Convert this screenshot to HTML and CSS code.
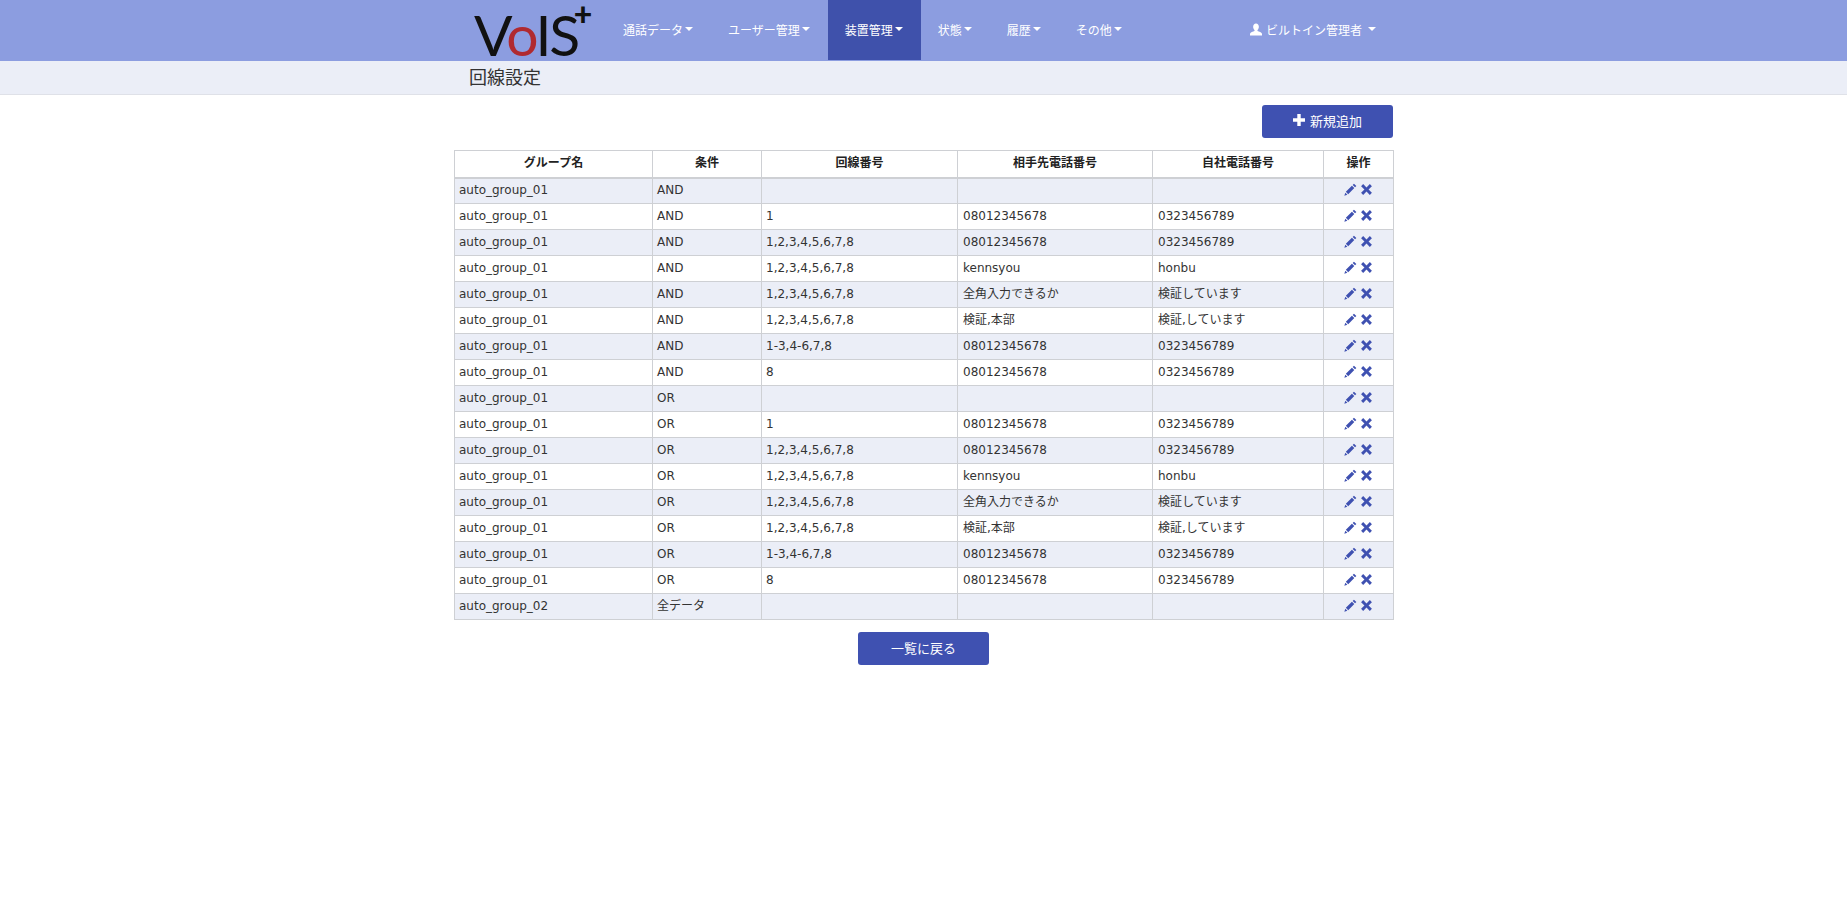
FILE: index.html
```html
<!DOCTYPE html>
<html lang="ja">
<head>
    <meta charset="UTF-8">
    <title>回線設定</title>
    <link rel="stylesheet" href="styles.css">
</head>
<body>
    <svg class="sprite" width="0" height="0">
        <symbol id="i-pencil" viewBox="0 0 12 12"><path d="M9.200.6l2.200 2.200-1.200 1.200L8 1.800zM7.300 2.500l2.200 2.200-5.600 5.600-2.200-2.200zM1.200 8.900l1.900 1.900-2.800.9z"/></symbol>
        <symbol id="i-cross" viewBox="0 0 12 12"><path d="M2.900 1L6 4.100 9.100 1 11 2.900 7.900 6 11 9.100 9.100 11 6 7.900 2.900 11 1 9.100 4.100 6 1 2.900z"/></symbol>
        <symbol id="i-plus" viewBox="0 0 12 12"><path d="M4.300 0h3.400v4.300H12v3.400H7.700V12H4.300V7.700H0V4.300h4.300z"/></symbol>
        <symbol id="i-user" viewBox="0 0 13 13"><path d="M6.500 0C8.400 0 9.600 1.500 9.600 3.500c0 1.400-.6 2.800-1.500 3.600v1.100c1.800.6 4.400 1.400 4.900 2.800V13H0v-2c.5-1.400 3.100-2.200 4.900-2.800V7.100C4 6.300 3.400 4.900 3.400 3.500 3.400 1.500 4.600 0 6.500 0z"/></symbol>
    </svg>

    <header class="navbar">
        <div class="container nav-inner">
            <a class="logo" href="#">V<span class="logo-o">o</span>IS<span class="logo-plus">+</span></a>
            <ul class="nav-menu">
                <li><a href="#">通話データ<span class="caret"></span></a></li>
                <li><a href="#">ユーザー管理<span class="caret"></span></a></li>
                <li class="active"><a href="#">装置管理<span class="caret"></span></a></li>
                <li><a href="#">状態<span class="caret"></span></a></li>
                <li><a href="#">履歴<span class="caret"></span></a></li>
                <li><a href="#">その他<span class="caret"></span></a></li>
            </ul>
            <a class="nav-user" href="#"><svg class="icon-user"><use href="#i-user"/></svg>ビルトイン管理者<span class="caret caret-user"></span></a>
        </div>
    </header>

    <div class="page-title">
        <div class="container"><h1>回線設定</h1></div>
    </div>

    <main class="container">
        <div class="toolbar">
            <a class="btn btn-add" href="#"><svg class="icon-plus"><use href="#i-plus"/></svg>新規追加</a>
        </div>

        <table class="list">
            <colgroup>
                <col class="c-group"><col class="c-cond"><col class="c-line"><col class="c-peer"><col class="c-own"><col class="c-ops">
            </colgroup>
            <thead>
                <tr><th>グループ名</th><th>条件</th><th>回線番号</th><th>相手先電話番号</th><th>自社電話番号</th><th>操作</th></tr>
            </thead>
            <tbody>
                <tr><td>auto_group_01</td><td>AND</td><td></td><td></td><td></td><td class="ops"><svg class="op"><use href="#i-pencil"/></svg><svg class="op"><use href="#i-cross"/></svg></td></tr>
                <tr><td>auto_group_01</td><td>AND</td><td>1</td><td>08012345678</td><td>0323456789</td><td class="ops"><svg class="op"><use href="#i-pencil"/></svg><svg class="op"><use href="#i-cross"/></svg></td></tr>
                <tr><td>auto_group_01</td><td>AND</td><td>1,2,3,4,5,6,7,8</td><td>08012345678</td><td>0323456789</td><td class="ops"><svg class="op"><use href="#i-pencil"/></svg><svg class="op"><use href="#i-cross"/></svg></td></tr>
                <tr><td>auto_group_01</td><td>AND</td><td>1,2,3,4,5,6,7,8</td><td>kennsyou</td><td>honbu</td><td class="ops"><svg class="op"><use href="#i-pencil"/></svg><svg class="op"><use href="#i-cross"/></svg></td></tr>
                <tr><td>auto_group_01</td><td>AND</td><td>1,2,3,4,5,6,7,8</td><td>全角入力できるか</td><td>検証しています</td><td class="ops"><svg class="op"><use href="#i-pencil"/></svg><svg class="op"><use href="#i-cross"/></svg></td></tr>
                <tr><td>auto_group_01</td><td>AND</td><td>1,2,3,4,5,6,7,8</td><td>検証,本部</td><td>検証,しています</td><td class="ops"><svg class="op"><use href="#i-pencil"/></svg><svg class="op"><use href="#i-cross"/></svg></td></tr>
                <tr><td>auto_group_01</td><td>AND</td><td>1-3,4-6,7,8</td><td>08012345678</td><td>0323456789</td><td class="ops"><svg class="op"><use href="#i-pencil"/></svg><svg class="op"><use href="#i-cross"/></svg></td></tr>
                <tr><td>auto_group_01</td><td>AND</td><td>8</td><td>08012345678</td><td>0323456789</td><td class="ops"><svg class="op"><use href="#i-pencil"/></svg><svg class="op"><use href="#i-cross"/></svg></td></tr>
                <tr><td>auto_group_01</td><td>OR</td><td></td><td></td><td></td><td class="ops"><svg class="op"><use href="#i-pencil"/></svg><svg class="op"><use href="#i-cross"/></svg></td></tr>
                <tr><td>auto_group_01</td><td>OR</td><td>1</td><td>08012345678</td><td>0323456789</td><td class="ops"><svg class="op"><use href="#i-pencil"/></svg><svg class="op"><use href="#i-cross"/></svg></td></tr>
                <tr><td>auto_group_01</td><td>OR</td><td>1,2,3,4,5,6,7,8</td><td>08012345678</td><td>0323456789</td><td class="ops"><svg class="op"><use href="#i-pencil"/></svg><svg class="op"><use href="#i-cross"/></svg></td></tr>
                <tr><td>auto_group_01</td><td>OR</td><td>1,2,3,4,5,6,7,8</td><td>kennsyou</td><td>honbu</td><td class="ops"><svg class="op"><use href="#i-pencil"/></svg><svg class="op"><use href="#i-cross"/></svg></td></tr>
                <tr><td>auto_group_01</td><td>OR</td><td>1,2,3,4,5,6,7,8</td><td>全角入力できるか</td><td>検証しています</td><td class="ops"><svg class="op"><use href="#i-pencil"/></svg><svg class="op"><use href="#i-cross"/></svg></td></tr>
                <tr><td>auto_group_01</td><td>OR</td><td>1,2,3,4,5,6,7,8</td><td>検証,本部</td><td>検証,しています</td><td class="ops"><svg class="op"><use href="#i-pencil"/></svg><svg class="op"><use href="#i-cross"/></svg></td></tr>
                <tr><td>auto_group_01</td><td>OR</td><td>1-3,4-6,7,8</td><td>08012345678</td><td>0323456789</td><td class="ops"><svg class="op"><use href="#i-pencil"/></svg><svg class="op"><use href="#i-cross"/></svg></td></tr>
                <tr><td>auto_group_01</td><td>OR</td><td>8</td><td>08012345678</td><td>0323456789</td><td class="ops"><svg class="op"><use href="#i-pencil"/></svg><svg class="op"><use href="#i-cross"/></svg></td></tr>
                <tr><td>auto_group_02</td><td>全データ</td><td></td><td></td><td></td><td class="ops"><svg class="op"><use href="#i-pencil"/></svg><svg class="op"><use href="#i-cross"/></svg></td></tr>
            </tbody>
        </table>

        <div class="back-row">
            <a class="btn btn-back" href="#">一覧に戻る</a>
        </div>
    </main>
</body>
</html>
```

FILE: styles.css
```css
* {
    box-sizing: border-box;
}
body {
    margin: 0;
    background: #fff;
    color: #333;
    font-family: "DejaVu Sans", "Noto Sans CJK JP", sans-serif;
    font-size: 12px;
}
a {
    text-decoration: none;
}
.sprite {
    display: block;
}
.container {
    width: 969px;
    margin: 0 auto;
    padding: 0 15px;
}

/* top bar */
.navbar {
    height: 61px;
    background: #8c9de0;
}
.nav-inner {
    display: flex;
    height: 60px;
}
.logo {
    width: 152px;
    padding: 4px 0 0 20px;
    color: #111;
    font-family: "Lato", sans-serif;
    font-size: 57px;
    line-height: 60px;
    letter-spacing: -2.200px;
    white-space: nowrap;
}
.logo-o {
    color: #b02a30;
}
.logo-plus {
    margin-left: -4px;
    font-size: 32px;
    font-weight: 900;
    line-height: 0;
    vertical-align: 30px;
    letter-spacing: 0;
}
.nav-menu {
    display: flex;
    margin: 0;
    padding: 0;
    list-style: none;
}
.nav-menu a {
    display: flex;
    align-items: center;
    height: 60px;
    padding: 0 18px 2px 17px;
    color: #fff;
}
.nav-menu .active a {
    background: #3f51ab;
}
.caret {
    display: inline-block;
    width: 0;
    height: 0;
    margin-left: 2px;
    border-top: 4px solid #fff;
    border-left: 4px solid transparent;
    border-right: 4px solid transparent;
}
.nav-user {
    display: flex;
    align-items: center;
    margin-left: auto;
    padding: 0 17px 2px;
    color: #fff;
}
.icon-user {
    width: 12px;
    height: 13px;
    margin-right: 4px;
    fill: #fff;
}
.caret-user {
    margin-left: 6px;
}

/* page heading */
.page-title {
    height: 34px;
    background: #ebeef7;
    border-bottom: 1px solid #dfe1e8;
}
.page-title h1 {
    margin: 0;
    padding-left: 15px;
    color: #333;
    font-size: 18px;
    font-weight: 400;
    line-height: 33px;
}

/* buttons */
.btn {
    display: flex;
    align-items: center;
    justify-content: center;
    height: 33px;
    padding-bottom: 3px;
    background: #3f51b1;
    border-radius: 3px;
    color: #fff;
    font-size: 13px;
}
.toolbar {
    display: flex;
    justify-content: flex-end;
    padding: 10px 0 12px;
}
.btn-add {
    width: 131px;
}
.icon-plus {
    width: 12px;
    height: 12px;
    margin-right: 5px;
    fill: #fff;
}
.back-row {
    display: flex;
    justify-content: center;
    padding-top: 12px;
}
.btn-back {
    width: 131px;
}

/* table */
.list {
    width: 939px;
    border-collapse: collapse;
    table-layout: fixed;
}
.c-group { width: 198px; }
.c-cond { width: 109px; }
.c-line { width: 196px; }
.c-peer { width: 195px; }
.c-own { width: 171px; }
.c-ops { width: 70px; }
.list th,
.list td {
    height: 26px;
    padding: 0 4px;
    border: 1px solid #ced0d4;
    font-weight: 400;
    line-height: 17px;
}
.list th {
    height: 27px;
    border-bottom-width: 2px;
    color: #222;
    font-weight: 700;
    text-align: center;
}
.list td:nth-child(n+4) {
    padding-left: 5px;
}
.list tbody tr:nth-child(odd) {
    background: #ebeef7;
}
.list td.ops {
    padding: 0;
    text-align: center;
}
.op {
    width: 13px;
    height: 13px;
    margin: 0 1px -2px 1px;
    fill: #3f51b1;
}
.op + .op {
    margin-left: 2px;
}
```
